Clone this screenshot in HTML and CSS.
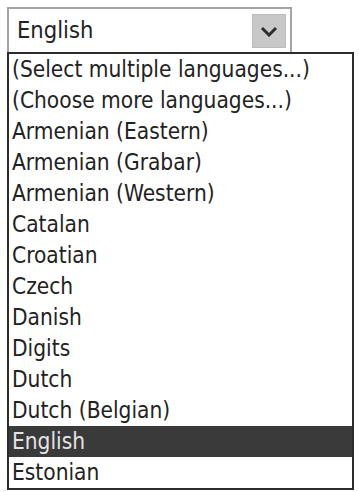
FILE: index.html
```html
<!DOCTYPE html>
<html>
<head>
<meta charset="utf-8">
<link rel="stylesheet" href="styles.css">
</head>
<body>
<div class="wrap">
  <div class="combo">
    <span class="combo-text">English</span>
    <span class="combo-btn">
      <svg width="18" height="11" viewBox="0 0 18 11"><path d="M2 2 L9 9 L16 2" fill="none" stroke="#2e2e2e" stroke-width="3"/></svg>
    </span>
  </div>
  <ul class="list">
    <li>(Select multiple languages...)</li>
    <li>(Choose more languages...)</li>
    <li>Armenian (Eastern)</li>
    <li>Armenian (Grabar)</li>
    <li>Armenian (Western)</li>
    <li>Catalan</li>
    <li>Croatian</li>
    <li>Czech</li>
    <li>Danish</li>
    <li>Digits</li>
    <li>Dutch</li>
    <li>Dutch (Belgian)</li>
    <li class="sel">English</li>
    <li>Estonian</li>
  </ul>
</div>
</body>
</html>
```
FILE: styles.css
```css
html, body {
  margin: 0;
  padding: 0;
  background: #ffffff;
}
.wrap {
  padding: 7px 0 0 7px;
  font-family: "DejaVu Sans Condensed", "DejaVu Sans", sans-serif;
  font-stretch: condensed;
  font-size: 22.5px;
  color: #222222;
}
.combo {
  box-sizing: border-box;
  width: 285px;
  height: 46px;
  border: 2px solid #a4a4a4;
  border-bottom: none;
  display: flex;
  align-items: center;
  justify-content: space-between;
  padding: 0 4px 0 8px;
  background: #fff;
  font-size: 23.5px;
}
.combo-text {
  line-height: 1;
}
.combo-btn {
  box-sizing: border-box;
  width: 34px;
  height: 34px;
  background: #c8c8c8;
  border: 1px solid #bcbcbc;
  display: flex;
  align-items: center;
  justify-content: center;
}
.list {
  list-style: none;
  margin: -1px 0 0 0;
  padding: 0;
  box-sizing: border-box;
  width: 347px;
  border: 2px solid #2c2c2c;
}
.list li {
  height: 31px;
  line-height: 31px;
  padding-left: 3px;
  white-space: nowrap;
}
.list li.sel {
  background: #3a3a3a;
  color: #e4e4e4;
}
```
